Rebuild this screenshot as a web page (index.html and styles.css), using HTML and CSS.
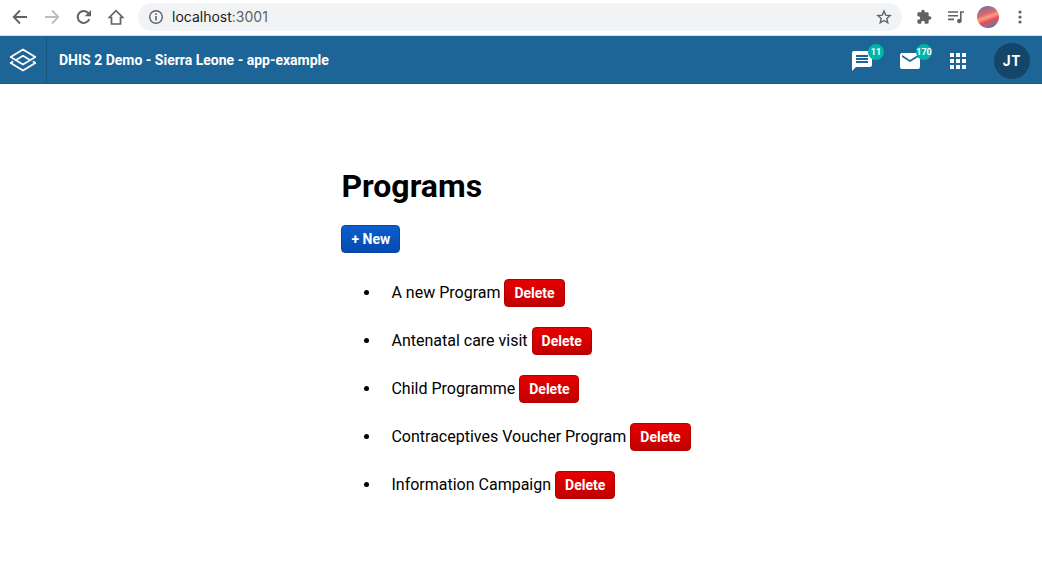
FILE: index.html
```html
<!DOCTYPE html>
<html lang="en">
<head>
<meta charset="utf-8">
<meta name="viewport" content="width=device-width, initial-scale=1">
<title>app-example</title>
<link rel="stylesheet" href="styles.css">
</head>
<body>
<div class="browser-bar">
  <div class="nav-buttons">
    <button class="icon-button" aria-label="Back"><svg class="icon" viewBox="0 0 16 16"><path d="M15 8H2M8 1.500 1.700 8 8 14.500" fill="none" stroke="currentColor" stroke-width="1.800"/></svg></button>
    <button class="icon-button faded" aria-label="Forward"><svg class="icon" viewBox="0 0 16 16"><path d="M1 8h13M8 1.500 14.300 8 8 14.500" fill="none" stroke="currentColor" stroke-width="1.800"/></svg></button>
    <button class="icon-button" aria-label="Reload"><svg class="icon" viewBox="0 0 16 16"><path d="M13.300 10.200A6 6 0 1 1 12.700 4.500" fill="none" stroke="currentColor" stroke-width="2"/><path d="M15 1v6.300H8.700z" fill="currentColor"/></svg></button>
    <button class="icon-button" aria-label="Home"><svg class="icon" viewBox="0 0 16 16"><path d="M1.200 8.500 8 1.700l6.800 6.800H12.500V15h-9V8.500z" fill="none" stroke="currentColor" stroke-width="1.700"/></svg></button>
  </div>
  <div class="address">
    <svg class="icon" viewBox="0 0 16 16" aria-hidden="true"><circle cx="8" cy="8" r="6.300" fill="none" stroke="currentColor" stroke-width="1.400"/><path d="M7.200 7h1.600v4.500H7.200zM7.200 4.300h1.600v1.600H7.200z" fill="currentColor"/></svg>
    <span class="url">localhost<span class="port">:3001</span></span>
    <button class="icon-button" aria-label="Bookmark"><svg class="icon" viewBox="0 0 16 16"><path d="m8 2 1.700 4.100 4.500.4-3.400 2.900 1 4.400L8 11.500l-3.800 2.300 1-4.400-3.400-2.900 4.500-.4z" fill="none" stroke="currentColor" stroke-width="1.400"/></svg></button>
  </div>
  <div class="tools">
    <button class="icon-button" aria-label="Extensions"><svg class="icon" viewBox="0 0 24 24"><path fill="currentColor" d="M20.500 11H19V7c0-1.100-.9-2-2-2h-4V3.500a2.500 2.500 0 0 0-5 0V5H4c-1.100 0-2 .9-2 2v3.800h1.500a2.700 2.700 0 0 1 0 5.400H2V20c0 1.100.9 2 2 2h3.800v-1.500a2.700 2.700 0 0 1 5.400 0V22H17c1.100 0 2-.9 2-2v-4h1.500a2.500 2.500 0 0 0 0-5z"/></svg></button>
    <button class="icon-button" aria-label="Media"><svg class="icon" viewBox="0 0 16 16"><path d="M0 3h10M0 6.700h10M0 10.400h6M12.800 12V3H16" fill="none" stroke="currentColor" stroke-width="1.600"/><circle cx="11.300" cy="12" r="2.300" fill="currentColor"/></svg></button>
    <button class="profile" aria-label="Profile"></button>
    <button class="icon-button" aria-label="Menu"><svg class="icon" viewBox="0 0 16 16" fill="currentColor"><circle cx="8" cy="3" r="1.600"/><circle cx="8" cy="8" r="1.600"/><circle cx="8" cy="13" r="1.600"/></svg></button>
  </div>
</div>
<header class="header">
  <a class="logo" href="#" aria-label="Home"><svg class="logo-mark" viewBox="0 0 28 26"><path d="M14 2.500 26.300 10 14 17.500 1.700 10zM7.500 12.800 14 8.700l6.500 4.100" fill="none" stroke="currentColor" stroke-width="1.800" stroke-linejoin="round"/><path d="M3.500 14.800 1.700 16 14 23.500 26.300 16l-1.800-1.200" fill="none" stroke="currentColor" stroke-width="1.800" stroke-linecap="round" stroke-linejoin="round"/></svg></a>
  <span class="app-title">DHIS 2 Demo - Sierra Leone - app-example</span>
  <div class="header-actions">
    <a class="action" href="#" aria-label="Interpretations"><svg class="action-icon" viewBox="0 0 24 24"><path fill="currentColor" d="M20 2H4c-1.100 0-2 .9-2 2v18l4-4h14c1.100 0 2-.9 2-2V4c0-1.100-.9-2-2-2zM6 6h12v2H6zm0 3h12v2H6zm0 3h12v2H6z" fill-rule="evenodd"/></svg><span class="badge">11</span></a>
    <a class="action" href="#" aria-label="Messages"><svg class="action-icon" viewBox="0 0 24 24"><path fill="currentColor" d="M20 4H4c-1.100 0-2 .9-2 2v12c0 1.100.9 2 2 2h16c1.100 0 2-.9 2-2V6c0-1.100-.9-2-2-2zm0 4-8 5-8-5V6l8 5 8-5z"/></svg><span class="badge">170</span></a>
    <button class="action" aria-label="Apps"><svg class="action-icon" viewBox="0 0 24 24"><path fill="currentColor" d="M4 4h4v4H4zm6 0h4v4h-4zm6 0h4v4h-4zM4 10h4v4H4zm6 0h4v4h-4zm6 0h4v4h-4zM4 16h4v4H4zm6 0h4v4h-4zm6 0h4v4h-4z"/></svg></button>
    <button class="avatar">JT</button>
  </div>
</header>
<main class="content">
  <div class="programs">
    <h1 class="heading">Programs</h1>
    <button class="button primary">+ New</button>
    <ul class="list">
      <li class="item">A new Program <button class="button danger">Delete</button></li>
      <li class="item">Antenatal care visit <button class="button danger">Delete</button></li>
      <li class="item">Child Programme <button class="button danger">Delete</button></li>
      <li class="item">Contraceptives Voucher Program <button class="button danger">Delete</button></li>
      <li class="item">Information Campaign <button class="button danger">Delete</button></li>
    </ul>
  </div>
</main>
</body>
</html>
```
FILE: styles.css
```css
* {
  box-sizing: border-box;
}

body {
  margin: 0;
  background: #fff;
  color: #000;
  font-family: Roboto, "Liberation Sans", sans-serif;
  font-size: 16px;
}

button {
  margin: 0;
  padding: 0;
  border: 0;
  background: none;
  color: inherit;
  font-family: inherit;
  cursor: pointer;
}

svg {
  display: block;
}

.browser-bar {
  display: flex;
  align-items: center;
  height: 36px;
  padding: 0 14px 2px 12px;
  border-bottom: 1px solid #dadce0;
  color: #5f6368;
}

.nav-buttons {
  display: flex;
  gap: 16px;
}

.icon {
  width: 16px;
  height: 16px;
}

.faded {
  color: #babcbe;
}

.address {
  display: flex;
  flex: 1;
  align-items: center;
  gap: 8px;
  height: 28px;
  margin-left: 14px;
  padding: 0 10px;
  border-radius: 14px;
  background: #f1f3f4;
}

.url {
  flex: 1;
  color: #202124;
  font-family: Inter, "Liberation Sans", sans-serif;
  font-size: 14px;
}

.port {
  color: #5f6368;
}

.tools {
  display: flex;
  align-items: center;
  gap: 16px;
  margin-left: 14px;
}

.tools .profile {
  width: 22px;
  height: 22px;
  margin: 0 -3px;
  border-radius: 50%;
  background: linear-gradient(160deg, #62648f 0%, #a0708f 22%, #e5646a 38%, #f9a184 50%, #e84d55 64%, #8b6e94 80%, #365c8f 100%);
}

.header {
  display: flex;
  align-items: center;
  height: 48px;
  border-bottom: 1px solid #1a5a8a;
  background: #1d6597;
  color: #fff;
}

.logo {
  display: flex;
  align-items: center;
  justify-content: center;
  width: 47px;
  height: 47px;
  border-right: 1px solid #19557f;
  color: inherit;
}

.logo-mark {
  width: 28px;
  height: 26px;
}

.app-title {
  flex: 1;
  padding-left: 12px;
  font-size: 14px;
  font-weight: 700;
}

.header-actions {
  display: flex;
  align-items: center;
  padding: 2px 12px 0 0;
}

.action {
  position: relative;
  display: flex;
  align-items: center;
  justify-content: center;
  width: 48px;
  height: 46px;
  color: inherit;
}

.action-icon {
  width: 24px;
  height: 24px;
}

.badge {
  position: absolute;
  top: 6px;
  right: 2px;
  min-width: 16px;
  height: 16px;
  border-radius: 8px;
  background: #00b5a5;
  font-size: 9px;
  font-weight: 700;
  line-height: 16px;
  text-align: center;
}

.avatar {
  width: 36px;
  height: 36px;
  margin-left: 12px;
  border-radius: 50%;
  background: #15466a;
  font-size: 14px;
  font-weight: 700;
  letter-spacing: 1px;
}

.content {
  display: flex;
  justify-content: center;
  padding: 83px 20px 40px;
}

.heading {
  margin: 0 0 20px;
  font-size: 32px;
  font-weight: 700;
  line-height: 38px;
}

.button {
  height: 28px;
  padding: 0 9px;
  border: 1px solid;
  border-radius: 4px;
  color: #fff;
  font-size: 14px;
  font-weight: 700;
}

.primary {
  border-color: #0a47a0;
  background: linear-gradient(#0b5fcc, #054ab0);
}

.danger {
  border-color: #b00000;
  background: linear-gradient(#e60000, #c20000);
}

.list {
  margin: 16px 0;
  padding-left: 40px;
}

.item {
  padding: 10px;
  line-height: 24px;
}
```
